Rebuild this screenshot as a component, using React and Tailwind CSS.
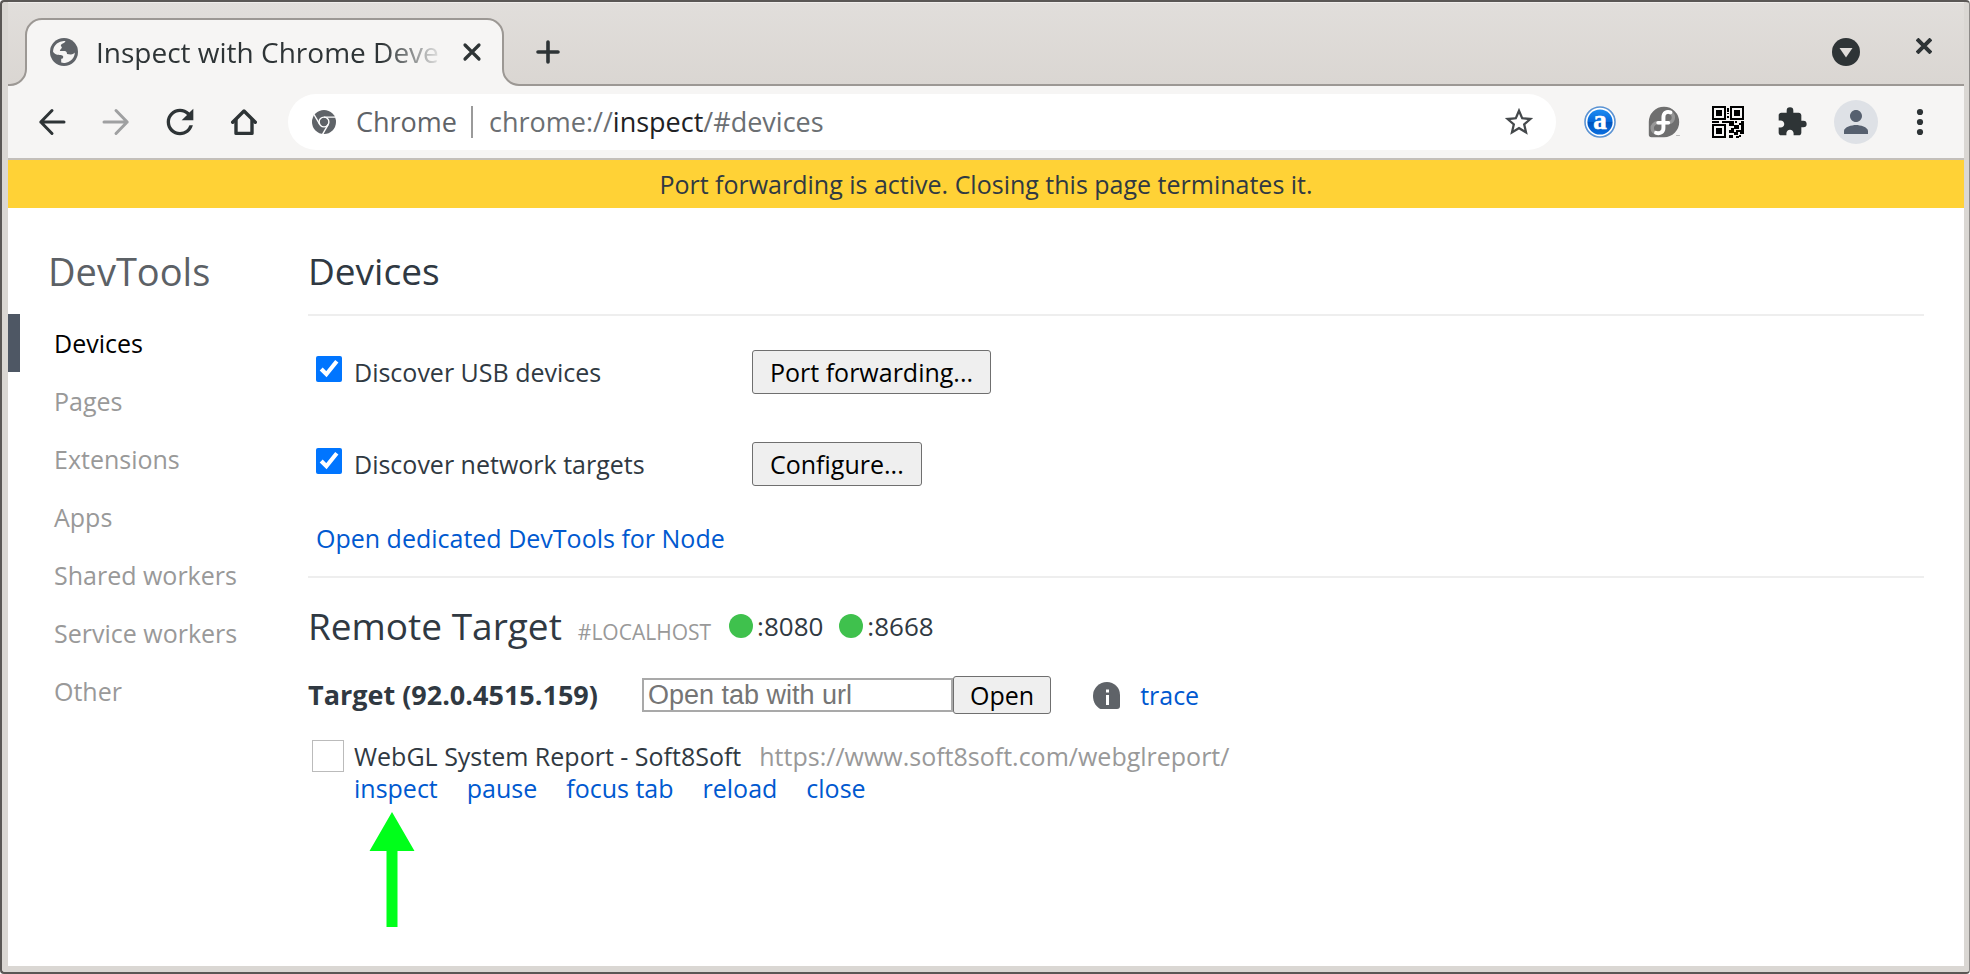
import React from "react";
import { MdExtension, MdPerson, MdRefresh, MdStarBorder } from "react-icons/md";

const navItems = ["Devices", "Pages", "Extensions", "Apps", "Shared workers", "Service workers", "Other"];
const ports = [":8080", ":8668"];
const actions = ["inspect", "pause", "focus tab", "reload", "close"];

function GlobeIcon() {
  return (
    <svg viewBox="0 0 28 28" className="size-7 shrink-0">
      <circle cx="14" cy="14" r="14" fill="#5f6368" />
      <path
        d="M15.5 3.1 C14.8 5 13 5.4 11.6 6.2 C10.6 6.8 10.6 8 11.6 8.8 C12.4 9.6 11.4 10.6 10.6 11.2 L9.8 13 L14.5 13 C16.5 13 17 14.5 17 16 L20.5 16.6 C22.5 16.8 24 15.6 24.9 14.6 A11 11 0 0 1 11.2 24.6 L11.2 20.8 C12.6 20.6 13.4 19.8 13.2 18.4 C12.8 16.6 9 17.2 6.4 16.4 C5 16 3.6 15 3 13.6 A11 11 0 0 1 15.5 3.1 Z"
        fill="#f6f5f4"
      />
    </svg>
  );
}

function ChromeIcon() {
  return (
    <svg viewBox="0 0 24 24" className="size-6 shrink-0" fill="none" stroke="#fff" strokeWidth="1.4">
      <circle cx="12" cy="12" r="12" fill="#5f6368" stroke="none" />
      <circle cx="12" cy="12" r="4.9" />
      <path d="M12 7.1H23.5" />
      <path d="M12 7.1H23.5" transform="rotate(120 12 12)" />
      <path d="M12 7.1H23.5" transform="rotate(240 12 12)" />
    </svg>
  );
}

function ArrowIcon({ className }) {
  return (
    <svg viewBox="0 0 28 28" className={"size-7 " + className} fill="none" stroke="currentColor" strokeWidth="3" strokeLinecap="round" strokeLinejoin="round">
      <path d="M14 2.5L2.8 14L14 25.5M2.8 14H26" />
    </svg>
  );
}

function HomeIcon() {
  return (
    <svg viewBox="0 0 28 28" className="size-7" fill="none" stroke="currentColor" strokeWidth="3.4" strokeLinecap="round" strokeLinejoin="round">
      <path d="M2.7 14.3L14 3L25.3 14.3" />
      <path d="M6 12V25.4H22V12" />
    </svg>
  );
}

function LetterBadge() {
  return (
    <svg viewBox="0 0 32 32" className="size-8">
      <defs>
        <linearGradient id="badge" x1="0" y1="0" x2="0" y2="1">
          <stop offset="0" stopColor="#1d8df2" />
          <stop offset="0.5" stopColor="#0668d9" />
          <stop offset="0.5" stopColor="#0053bd" />
          <stop offset="1" stopColor="#0a6fe0" />
        </linearGradient>
      </defs>
      <circle cx="16" cy="16" r="15" fill="#fff" stroke="#5b93d3" strokeWidth="1.6" />
      <circle cx="16" cy="16" r="12.6" fill="url(#badge)" />
      <text x="16" y="22.5" textAnchor="middle" fill="#fff" stroke="#fff" strokeWidth="0.6" fontSize="27" fontWeight="700" fontFamily="Liberation Serif, serif">a</text>
    </svg>
  );
}

function FedoraIcon() {
  return (
    <svg viewBox="0 0 32 32" className="size-8" fill="none" strokeLinecap="round">
      <path d="M16 0.8A15.2 15.2 0 0 1 16 31.2H3.5A2.7 2.7 0 0 1 0.8 28.5V16A15.2 15.2 0 0 1 16 0.8Z" fill="#6f6f6f" />
      <path d="M15 16.8H9.5A5.3 5.3 0 1 0 14.8 22V11A5.3 5.3 0 1 1 20.5 16.8H15" stroke="#979797" strokeWidth="3.4" />
      <path d="M22.5 6.4C18.5 5 15.5 7 15.5 11V22C15.5 26 12 28.2 8 26.8" stroke="#fff" strokeWidth="3.8" />
      <path d="M10 16.8H20.5" stroke="#fff" strokeWidth="3.4" />
      <path d="M28.5 29.5H31.5" stroke="#bbb" strokeWidth="1" />
    </svg>
  );
}

function QrIcon() {
  return (
    <svg viewBox="0 0 32 32" className="size-8" shapeRendering="crispEdges">
      <rect width="32" height="32" fill="#f6f5f4" />
      <g fill="none" stroke="#000" strokeWidth="2">
        <rect x="1" y="1" width="12" height="12" />
        <rect x="19" y="1" width="12" height="12" />
        <rect x="1" y="19" width="12" height="12" />
      </g>
      <path
        d="M4 4h6v6H4zM22 4h6v6h-6zM4 22h6v6H4zM15 2h2v4h-2zM15 7h2v1h-2zM15 10h2v2h-2zM0 15h7v2H0zM10 15h12v2H10zM23 15h2v2h-2zM29 15h3v9h-3zM17 17h5v3h-5zM22 19h5v4h-5zM27 17h2v2h-2zM17 24h5v3h-5zM19 22h3v2h-3zM24 24h8v2h-8zM22 26h4v3h-4zM17 29h4v3h-4zM28 26h4v2h-4zM24 30h3v2h-3zM27 29h2v2h-2z"
        fill="#000"
      />
    </svg>
  );
}

function TabEdge({ className }) {
  return (
    <svg viewBox="0 0 36 68" className={"h-[68px] w-9 shrink-0 " + className}>
      <path d="M0 67H2A16 16 0 0 0 18 51V17A16 16 0 0 1 34 1H36V68H0Z" fill="#f6f5f4" />
      <path d="M0 67H2A16 16 0 0 0 18 51V17A16 16 0 0 1 34 1H36" fill="none" stroke="#9c9894" strokeWidth="2" />
    </svg>
  );
}

function TabStrip() {
  return (
    <div className="flex h-[84px] items-end border-t border-[#efedeb] bg-linear-to-b from-[#e1dedb] to-[#dad6d2] text-[#2e3436]">
      <TabEdge className="" />
      <div className="flex h-[68px] w-[441px] items-center border-t-2 border-[#9c9894] bg-[#f6f5f4] pb-0.5 pl-1.5">
        <GlobeIcon />
        <span className="ml-4 w-[352px] overflow-hidden whitespace-nowrap pl-0.5 text-[28px] leading-9 mask-r-from-82% mask-r-to-100%">
          Inspect with Chrome Deve
        </span>
        <button aria-label="Close tab" className="ml-4">
          <svg viewBox="0 0 20 20" className="size-5" fill="none" stroke="currentColor" strokeWidth="3.2" strokeLinecap="round">
            <path d="M3 3L17 17M17 3L3 17" />
          </svg>
        </button>
      </div>
      <TabEdge className="-scale-x-100" />
      <div className="flex h-[68px] flex-1 items-center border-b-2 border-[#9c9894] pt-0.5 pl-[15px]">
        <button aria-label="New tab">
          <svg viewBox="0 0 24 24" className="size-6" fill="none" stroke="currentColor" strokeWidth="3.6" strokeLinecap="round">
            <path d="M12 2V22M2 12H22" />
          </svg>
        </button>
        <button aria-label="Search tabs" className="ml-auto">
          <svg viewBox="0 0 28 28" className="size-7">
            <circle cx="14" cy="14" r="14" fill="#2e3436" />
            <path d="M7.5 10H20.5L14 19.5Z" fill="#e0ddda" />
          </svg>
        </button>
        <button aria-label="Close window" className="mr-8 mb-3 ml-14">
          <svg viewBox="0 0 16 16" className="size-4" fill="none" stroke="currentColor" strokeWidth="4">
            <path d="M1 1L15 15M15 1L1 15" />
          </svg>
        </button>
      </div>
    </div>
  );
}

function ToolButton({ label, children }) {
  return (
    <button aria-label={label} className="flex h-14 w-16 items-center justify-center">
      {children}
    </button>
  );
}

function Toolbar() {
  return (
    <div className="flex items-center border-b-2 border-[#c3bfba] bg-[#f6f5f4] px-3 py-2 text-[#2e3436]">
      <ToolButton label="Back"><ArrowIcon className="" /></ToolButton>
      <ToolButton label="Forward"><ArrowIcon className="-scale-x-100 text-[#9fa0a1]" /></ToolButton>
      <ToolButton label="Reload"><MdRefresh className="size-10" /></ToolButton>
      <ToolButton label="Home"><HomeIcon /></ToolButton>
      <div className="mx-3 flex h-14 flex-1 items-center rounded-full bg-white px-6 text-[27px] leading-9 text-[#6b6f73]">
        <ChromeIcon />
        <span className="ml-5 text-[#5f6368]">Chrome</span>
        <span className="ml-3.5 h-8 w-0.5 bg-[#9a9a9a]" />
        <span className="ml-4 flex-1">
          chrome://<span className="text-[#202124]">inspect</span>/#devices
        </span>
        <button aria-label="Bookmark this page" className="-mr-1 text-[#45494c]">
          <MdStarBorder className="size-[34px]" />
        </button>
      </div>
      <ToolButton label="Page tools"><LetterBadge /></ToolButton>
      <ToolButton label="Fedora"><FedoraIcon /></ToolButton>
      <ToolButton label="QR code"><QrIcon /></ToolButton>
      <ToolButton label="Extensions"><MdExtension className="size-8" /></ToolButton>
      <ToolButton label="Profile">
        <span className="flex size-11 items-center justify-center rounded-full bg-[#dee1e6]">
          <MdPerson className="size-9 text-[#56606f]" />
        </span>
      </ToolButton>
      <ToolButton label="Menu">
        <svg viewBox="0 0 8 28" className="h-7 w-2" fill="currentColor">
          <circle cx="4" cy="4" r="3.1" />
          <circle cx="4" cy="14" r="3.1" />
          <circle cx="4" cy="24" r="3.1" />
        </svg>
      </ToolButton>
    </div>
  );
}

function Sidebar() {
  return (
    <aside className="w-[300px] shrink-0 pt-5">
      <h1 className="pl-10 text-[38px] leading-[86px] text-[#5c6166]">DevTools</h1>
      <ul>
        {navItems.map((item, i) => (
          <li key={item}>
            <a
              href="#devices"
              className={
                "block border-l-12 pl-[34px] leading-[58px] " +
                (i === 0 ? "border-[#4e5764] text-black" : "border-transparent text-[#999]")
              }
            >
              {item}
            </a>
          </li>
        ))}
      </ul>
    </aside>
  );
}

const buttonStyle = "rounded-[3px] border border-[#6f6f6f] bg-[#efefef] text-black";

function SettingRow({ id, label, button }) {
  return (
    <div className="flex h-11 items-center pl-2">
      <input id={id} type="checkbox" defaultChecked className="mb-1.5 size-[26px] accent-[#0075ff]" />
      <label htmlFor={id} className="w-[410px] pl-3">{label}</label>
      <button className={buttonStyle + " h-11 px-[17px]"}>{button}</button>
    </div>
  );
}

function Main() {
  return (
    <main className="mr-10 min-w-0 flex-1 pt-5">
      <h2 className="border-b-2 border-[#eee] text-[37px] leading-[86px]">Devices</h2>
      <section className="flex flex-col border-b-2 border-[#eee] pt-[34px] pb-5">
        <div className="flex flex-col gap-12">
          <SettingRow id="usb" label="Discover USB devices" button="Port forwarding..." />
          <SettingRow id="network" label="Discover network targets" button="Configure..." />
        </div>
        <a href="#node" className="mt-[34px] ml-2 self-start leading-9 text-[#0059d0]">
          Open dedicated DevTools for Node
        </a>
      </section>
      <section>
        <div className="flex h-24 items-center">
          <div className="flex items-baseline gap-4">
            <h2 className="text-[37px] leading-10">Remote Target</h2>
            <span className="text-[21px] leading-6 text-[#999]">#LOCALHOST</span>
          </div>
          <div className="ml-[18px] flex gap-4 text-[26px]">
            {ports.map((port) => (
              <span key={port} className="flex items-center gap-1">
                <span className="size-6 rounded-full bg-[#3fc14d]" />
                {port}
              </span>
            ))}
          </div>
        </div>
        <div className="flex h-[42px] items-center">
          <h3 className="w-[334px] text-[27px] font-bold">Target (92.0.4515.159)</h3>
          <input
            type="text"
            aria-label="Open tab with url"
            placeholder="Open tab with url"
            className="h-[34px] w-[311px] border-2 border-[#a9a9a9] bg-white px-1 font-['Liberation_Sans',sans-serif] text-[27px] leading-7 placeholder:text-[#757575]"
          />
          <button className={buttonStyle + " h-[38px] px-4 leading-9"}>Open</button>
          <svg viewBox="0 0 27 27" className="ml-[42px] size-[27px]">
            <path d="M14 0A13 13 0 0 1 27 13V24A3 3 0 0 1 24 27H7.5C3.5 25 0 20.5 0 14A14 14 0 0 1 14 0Z" fill="#5f6368" />
            <path d="M13 7.5h3v3h-3zM13 13h3v10h-3z" fill="#fff" />
          </svg>
          <a href="#trace" className="ml-5 text-[#0059d0]">trace</a>
        </div>
        <div className="flex pt-6 leading-8">
          <span className="ml-1 size-8 shrink-0 border border-[#bbb]" />
          <div className="ml-2.5">
            <div className="flex gap-[18px]">
              <span>WebGL System Report - Soft8Soft</span>
              <span className="text-[#999]">https://www.soft8soft.com/webglreport/</span>
            </div>
            <div className="flex gap-[29px]">
              {actions.map((action) => (
                <a key={action} href={"#" + action.replace(" ", "-")} className="text-[#0059d0]">{action}</a>
              ))}
            </div>
          </div>
        </div>
        <svg viewBox="0 0 46 116" className="mt-2 ml-[61px] h-[116px] w-[46px]">
          <path d="M23 0L45.5 39H28.5V115H17.5V39H0.5Z" fill="#00ff1a" />
        </svg>
      </section>
    </main>
  );
}

export default function App() {
  return (
    <div className="flex min-h-screen flex-col overflow-hidden rounded-sm border-2 border-r border-[#5a5755] border-r-[#8e8b89] bg-[#dad7d3] pr-[5px] pb-1.5 pl-1.5 font-['Open_Sans','Noto_Sans',sans-serif] text-[25px] leading-9 text-[#303942]">
      <TabStrip />
      <Toolbar />
      <p className="bg-[#ffd236] text-center leading-[48px]">Port forwarding is active. Closing this page terminates it.</p>
      <div className="flex flex-1 bg-white">
        <Sidebar />
        <Main />
      </div>
    </div>
  );
}
